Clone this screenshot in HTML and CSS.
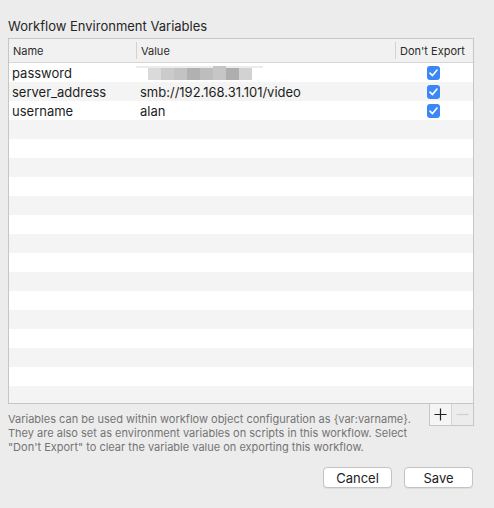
FILE: index.html
```html
<!DOCTYPE html>
<html>
<head>
<meta charset="utf-8">
<link rel="stylesheet" href="styles.css">
</head>
<body>
<div class="dialog">
  <div class="title">Workflow Environment Variables</div>
  <div class="table">
    <div class="thead">
      <div class="th c-name">Name</div>
      <div class="th c-value">Value</div>
      <div class="th c-exp">Don't Export</div>
    </div>
    <div class="tbody">
      <div class="row">
        <div class="td c-name">password</div>
        <div class="td c-value">
          <svg class="blur" width="130" height="18" viewBox="0 0 130 18">
            <rect x="0" y="2" width="127" height="2" fill="#ececec"/>
            <rect x="12" y="4" width="13" height="12" fill="#dadada"/>
            <rect x="25" y="4" width="13" height="12" fill="#cbcbcb"/>
            <rect x="38" y="4" width="13" height="12" fill="#c3c3c3"/>
            <rect x="51" y="4" width="13" height="12" fill="#b1b1b1"/>
            <rect x="64" y="4" width="13" height="12" fill="#bdbdbd"/>
            <rect x="77" y="2" width="13" height="14" fill="#c6c6c6"/>
            <rect x="90" y="4" width="13" height="12" fill="#aeaeae"/>
            <rect x="103" y="4" width="13" height="12" fill="#d2d2d2"/>
          </svg>
        </div>
        <div class="td c-exp"><span class="cb"><svg width="9" height="8" viewBox="0 0 9 8"><path d="M1 4.2 L3.5 6.6 L8 1" fill="none" stroke="#fff" stroke-width="1.6" stroke-linecap="round" stroke-linejoin="round"/></svg></span></div>
      </div>
      <div class="row">
        <div class="td c-name">server_address</div>
        <div class="td c-value">smb://192.168.31.101/video</div>
        <div class="td c-exp"><span class="cb"><svg width="9" height="8" viewBox="0 0 9 8"><path d="M1 4.2 L3.5 6.6 L8 1" fill="none" stroke="#fff" stroke-width="1.6" stroke-linecap="round" stroke-linejoin="round"/></svg></span></div>
      </div>
      <div class="row">
        <div class="td c-name">username</div>
        <div class="td c-value">alan</div>
        <div class="td c-exp"><span class="cb"><svg width="9" height="8" viewBox="0 0 9 8"><path d="M1 4.2 L3.5 6.6 L8 1" fill="none" stroke="#fff" stroke-width="1.6" stroke-linecap="round" stroke-linejoin="round"/></svg></span></div>
      </div>
      <div class="row"></div><div class="row"></div><div class="row"></div>
      <div class="row"></div><div class="row"></div><div class="row"></div>
      <div class="row"></div><div class="row"></div><div class="row"></div>
      <div class="row"></div><div class="row"></div><div class="row"></div>
      <div class="row"></div><div class="row"></div><div class="row"></div>
    </div>
  </div>
  <div class="below">
    <div class="help">Variables can be used within workflow object configuration as {var:varname}.<br>They are also set as environment variables on scripts in this workflow. Select<br>"Don't Export" to clear the variable value on exporting this workflow.</div>
    <div class="pm">
      <div class="pm-btn plus"><svg width="13" height="13" viewBox="0 0 13 13"><path d="M6.5 0.5 V12.5 M0.5 6.5 H12.5" stroke="#222" stroke-width="1.2"/></svg></div>
      <div class="pm-btn minus"><svg width="13" height="13" viewBox="0 0 13 13"><path d="M0.5 6.5 H12.5" stroke="#cfcfcf" stroke-width="1.2"/></svg></div>
    </div>
  </div>
  <div class="actions">
    <button class="btn">Cancel</button>
    <button class="btn">Save</button>
  </div>
</div>
</body>
</html>
```
FILE: styles.css
```css
html, body {
  margin: 0;
  padding: 0;
  background: #ececec;
}
body {
  font-family: Inter, "Liberation Sans", Arial, sans-serif;
  color: #1e1e1e;
}
.dialog {
  width: 494px;
  height: 508px;
  padding: 18px 20px 0 8px;
  box-sizing: border-box;
  display: flex;
  flex-direction: column;
}
.title {
  font-size: 13px;
  line-height: 16px;
  height: 16px;
  margin-bottom: 4px;
  color: #262626;
}
.table {
  width: 466px;
  height: 366px;
  box-sizing: border-box;
  border: 1px solid #c6c6c6;
  background: #fff;
  display: flex;
  flex-direction: column;
  overflow: hidden;
}
.thead {
  display: flex;
  height: 24px;
  flex: none;
  background: #f1f1f1;
  border-bottom: 1px solid #d6d6d6;
  box-sizing: border-box;
  font-size: 11px;
  color: #2b2b2b;
}
.th {
  display: flex;
  align-items: center;
  box-sizing: border-box;
  position: relative;
}
.th.c-value::before, .th.c-exp::before {
  content: "";
  position: absolute;
  left: 0;
  top: 3px;
  bottom: 3px;
  width: 1px;
  background: #d2d2d2;
}
.c-name { width: 127px; padding-left: 4px; box-sizing: border-box; }
.c-value { width: 259px; padding-left: 4px; box-sizing: border-box; }
.c-exp { flex: 1; justify-content: center; }
.thead .c-name { padding-left: 4px; }
.thead .c-value { padding-left: 5px; }
.thead .c-exp { padding-left: 5px; justify-content: flex-start; }
.tbody {
  flex: 1;
  overflow: hidden;
}
.row {
  display: flex;
  height: 19px;
  align-items: center;
  font-size: 13px;
  color: #1e1e1e;
}
.row:nth-child(even) { background: #f4f4f4; }
.td {
  display: flex;
  align-items: center;
  height: 19px;
  white-space: nowrap;
}
.tbody .c-name { padding-left: 3px; }
.tbody .c-value { padding-left: 4px; }
.tbody .c-exp { justify-content: flex-start; padding-left: 32px; }
.blur { display: block; margin-left: -4px; }
.cb {
  width: 13px;
  height: 14px;
  border-radius: 3px;
  background: #3c87f7;
  display: flex;
  align-items: center;
  justify-content: center;
}
.cb svg { display: block; }
.below {
  display: flex;
  justify-content: space-between;
  align-items: flex-start;
}
.help {
  font-size: 11px;
  line-height: 14px;
  color: #747474;
  margin-top: 8px;
  white-space: nowrap;
}
.pm {
  display: flex;
  margin-top: -1px;
  border: 1px solid #c6c6c6;
  height: 23px;
  box-sizing: border-box;
}
.pm-btn {
  width: 21px;
  height: 21px;
  display: flex;
  align-items: center;
  justify-content: center;
}
.pm-btn.plus {
  background: #f5f5f5;
  border-right: 1px solid #d3d3d3;
}
.pm-btn.minus { background: #ececec; width: 21px; }
.pm-btn svg { display: block; }
.actions {
  display: flex;
  justify-content: flex-end;
  gap: 12px;
  margin-top: 13px;
  width: 465px;
}
.btn {
  width: 69px;
  height: 21px;
  padding: 0;
  font-family: Inter, "Liberation Sans", Arial, sans-serif;
  font-size: 13px;
  color: #222;
  background: #fff;
  border: 1px solid #c3c3c3;
  border-radius: 4px;
  box-shadow: 0 1px 0 rgba(0,0,0,0.06);
}
```
